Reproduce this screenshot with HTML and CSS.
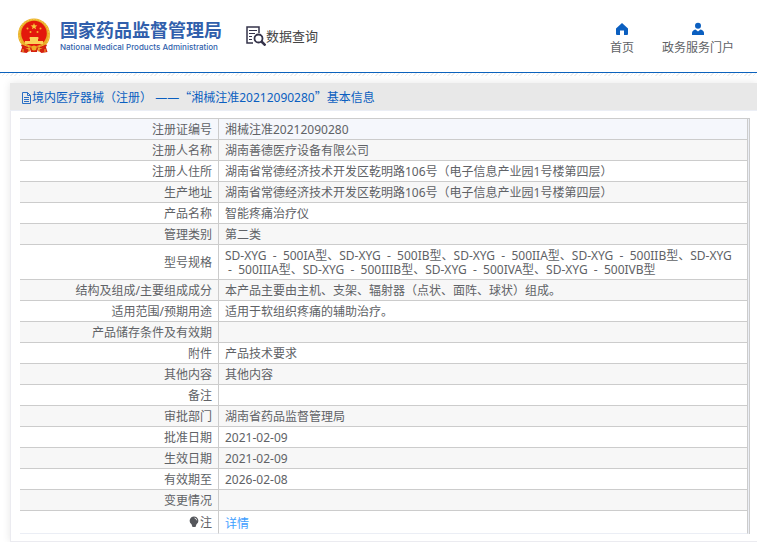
FILE: index.html
```html
<!DOCTYPE html>
<html lang="zh-CN">
<head>
<meta charset="utf-8">
<title>数据查询</title>
<link rel="stylesheet" href="styles.css">
</head>
<body>
<header class="site-header">
  <div class="brand">
    <svg class="emblem" viewBox="0 0 34 36" aria-hidden="true">
      <path d="M6 26 3.500 34l6 1 4-3h7l4 3 6-1L28 26z" fill="#d5200f"/>
      <circle cx="17" cy="16.500" r="16" fill="#e9ac24"/>
      <circle cx="17" cy="16.500" r="15" fill="none" stroke="#f6cf50" stroke-width="1" stroke-dasharray="2 1"/>
      <circle cx="17" cy="15.500" r="12.800" fill="#e3180c"/>
      <path d="m17 5 .9 2.300 2.500.1-2 1.500.7 2.400-2.100-1.400-2.100 1.400.7-2.400-2-1.500 2.500-.1z" fill="#f8c83c"/>
      <g fill="#f4b52c"><circle cx="10.500" cy="10.500" r="1"/><circle cx="23.500" cy="10.500" r="1"/><circle cx="13.500" cy="14" r="1"/><circle cx="20.500" cy="14" r="1"/></g>
      <path d="M13 19h8l1 1.500h-1V23h5v3H8v-3h5v-2.500h-1z" fill="#fbd158"/>
      <path d="M5 26q12 5 24 0l1 2q-5 3-9 2l-1 4h-6l-1-4q-4 1-9-2z" fill="#d5200f"/>
      <path d="M5 26q6 3 9 3h6q3 0 9-3M12 29v5M22 29v5M6 31v3M28 31v3" fill="none" stroke="#f1b52d"/>
      <circle cx="17" cy="30" r="2.500" fill="#efad26"/>
    </svg>
    <div class="brand-text">
      <strong class="brand-cn">国家药品监督管理局</strong>
      <span class="brand-en">National Medical Products Administration</span>
    </div>
  </div>
  <div class="section-name">
    <svg class="query-icon" viewBox="0 0 20 20" fill="none" stroke="#35334a" aria-hidden="true">
      <path d="M7 17H1V1h12v6" stroke-width="1.500"/>
      <path d="M3 4.500h8M3 7.500h6M3 10.500h3M3 13.500h3" stroke-width="1"/>
      <circle cx="12.500" cy="12.500" r="4" stroke-width="1.800"/>
      <path d="m15.500 15.500 4 4" stroke-width="2.500"/>
    </svg>
    <span>数据查询</span>
  </div>
  <nav class="top-nav">
    <a href="#home">
      <svg class="nav-icon" viewBox="0 0 14 14" aria-hidden="true"><path d="M7 1 1 6.500V12q0 1 1 1h3V8.500h4V13h3q1 0 1-1V6.500z" fill="#0b5fc0"/></svg>
      <span>首页</span>
    </a>
    <a href="#portal">
      <svg class="nav-icon" viewBox="0 0 14 14" aria-hidden="true"><circle cx="7" cy="3.700" r="3" fill="#0b5fc0"/><path d="M1 13v-2q0-2.500 3.500-3.500L7 9.500l2.500-2Q13 8.500 13 11v2z" fill="#0b5fc0"/></svg>
      <span>政务服务门户</span>
    </a>
  </nav>
</header>
<div class="hatch"></div>
<main class="panel">
  <h1 class="panel-title">
    <svg class="doc-icon" viewBox="0 0 11 12" fill="none" stroke="#2a6fc4" aria-hidden="true"><path d="M1.500.5h5l3 3v8h-8zM6.500.5v3h3M3 5.500h5M3 7.500h5M3 9.500h5"/></svg>
    <span>境内医疗器械<span class="paren" lang="zh-TW">（</span>注册<span class="paren" lang="zh-TW">）</span> ——<span class="quote">“</span>湘械注准20212090280<span class="quote">”</span>基本信息</span>
  </h1>
  <div class="table-frame">
    <table class="info">
      <tbody>
        <tr class="first"><th scope="row">注册证编号</th><td>湘械注准20212090280</td></tr>
        <tr><th scope="row">注册人名称</th><td>湖南善德医疗设备有限公司</td></tr>
        <tr><th scope="row">注册人住所</th><td>湖南省常德经济技术开发区乾明路106号<span class="paren" lang="zh-TW">（</span>电子信息产业园1号楼第四层<span class="paren" lang="zh-TW">）</span></td></tr>
        <tr><th scope="row">生产地址</th><td>湖南省常德经济技术开发区乾明路106号<span class="paren" lang="zh-TW">（</span>电子信息产业园1号楼第四层<span class="paren" lang="zh-TW">）</span></td></tr>
        <tr><th scope="row">产品名称</th><td>智能疼痛治疗仪</td></tr>
        <tr><th scope="row">管理类别</th><td>第二类</td></tr>
        <tr><th scope="row">型号规格</th><td>SD-XYG&nbsp; -&nbsp; 500IA型、SD-XYG&nbsp; -&nbsp; 500IB型、SD-XYG&nbsp; -&nbsp; 500IIA型、SD-XYG&nbsp; -&nbsp; 500IIB型、SD-XYG<br>&nbsp;-&nbsp; 500IIIA型、SD-XYG&nbsp; -&nbsp; 500IIIB型、SD-XYG&nbsp; -&nbsp; 500IVA型、SD-XYG&nbsp; -&nbsp; 500IVB型</td></tr>
        <tr><th scope="row">结构及组成/主要组成成分</th><td>本产品主要由主机、支架、辐射器<span class="paren" lang="zh-TW">（</span>点状、面阵、球状<span class="paren" lang="zh-TW">）</span>组成。</td></tr>
        <tr><th scope="row">适用范围/预期用途</th><td>适用于软组织疼痛的辅助治疗。</td></tr>
        <tr><th scope="row">产品储存条件及有效期</th><td></td></tr>
        <tr><th scope="row">附件</th><td>产品技术要求</td></tr>
        <tr><th scope="row">其他内容</th><td>其他内容</td></tr>
        <tr><th scope="row">备注</th><td></td></tr>
        <tr><th scope="row">审批部门</th><td>湖南省药品监督管理局</td></tr>
        <tr><th scope="row">批准日期</th><td>2021-02-09</td></tr>
        <tr><th scope="row">生效日期</th><td>2021-02-09</td></tr>
        <tr><th scope="row">有效期至</th><td>2026-02-08</td></tr>
        <tr><th scope="row">变更情况</th><td></td></tr>
        <tr class="last"><th scope="row"><svg class="bulb-icon" viewBox="0 0 10 12" aria-hidden="true"><path d="M5 .5a4.300 4.300 0 0 1 2.500 7.800L6.500 11h-3l-1-2.700A4.300 4.300 0 0 1 5 .5z" fill="#55575c"/><path d="M5.500 2q2 .3 2.200 2.300" fill="none" stroke="#fff" stroke-width=".8"/></svg>注</th><td><a href="#detail">详情</a></td></tr>
      </tbody>
    </table>
  </div>
</main>
</body>
</html>
```
FILE: styles.css
```css
* {
  box-sizing: border-box;
}

body {
  margin: 0;
  background: #fff;
  color: #606266;
  font: 12px/14px "Noto Sans", "Noto Sans CJK SC", sans-serif;
}

a {
  color: inherit;
  text-decoration: none;
}

.site-header {
  display: flex;
  align-items: center;
  height: 73px;
  padding: 0 23px 0 17px;
  border-bottom: 1px solid #0b62bd;
}

.hatch {
  height: 3px;
  background: repeating-linear-gradient(135deg, #eee 0 1px, #fff 1px 3px);
}

.brand {
  display: flex;
  align-items: center;
  gap: 9px;
}

.emblem {
  width: 34px;
  height: 36px;
}

.brand-text {
  display: flex;
  flex-direction: column;
  color: #315fac;
  white-space: nowrap;
}

.brand-cn {
  font-size: 18px;
  line-height: 22px;
}

.brand-en {
  font: 500 8px/12px Inter, sans-serif;
}

.section-name {
  display: flex;
  align-items: center;
  margin-left: 24px;
  color: #444;
  font-size: 13px;
  line-height: 20px;
}

.query-icon {
  width: 20px;
  height: 20px;
}

.top-nav {
  display: flex;
  gap: 28px;
  margin-left: auto;
  padding-top: 8px;
}

.top-nav a {
  display: flex;
  flex-direction: column;
  align-items: center;
  gap: 2px;
  line-height: 20px;
}

.nav-icon {
  width: 14px;
  height: 14px;
}

.panel {
  margin: 7px 0 0 10px;
  padding-bottom: 7px;
  border: 1px solid #ebebf0;
  border-width: 0 0 1px 1px;
  box-shadow: 0 0 8px rgba(0, 0, 0, 0.1);
}

.panel-title {
  display: flex;
  align-items: center;
  height: 28px;
  margin: 0 0 7px -1px;
  padding: 2px 11px 0;
  background: #e8e8e8;
  border-bottom: 1px solid #ebeef5;
  color: #0b5fc0;
  font-size: 12px;
  font-weight: 400;
}

.doc-icon {
  width: 11px;
  height: 12px;
}

/* Full-width punctuation centred in its em box */
.paren {
  font-family: "Noto Sans CJK TC", sans-serif;
  line-height: 10px;
}

.quote {
  font-family: "Noto Sans CJK SC", sans-serif;
  line-height: 10px;
}

.table-frame {
  margin: 0 7px 0 9px;
  padding-right: 1px;
  border: 1px solid #ccc;
  border-width: 1px 1px 0 0;
  background: #ebeef5;
}

.info {
  width: 100%;
  border-spacing: 0;
  background: #fff;
}

.info th,
.info td {
  height: 21px;
  padding: 4px 6px 2px;
  border: 1px solid #ccc;
  border-width: 0 1px 1px 0;
  font-weight: 400;
  text-align: left;
}

.info th {
  width: 199px;
  text-align: right;
}

.info tr:nth-child(even) {
  background: #f7f7f7;
}

.info .first {
  background: #f5f7fc;
}

.info .last th,
.info .last td {
  height: 23px;
  border-bottom-color: #ebeef5;
}

.info .last td {
  padding: 6px 6px 2px;
}

.info .last a {
  color: #409eff;
}

.bulb-icon {
  width: 10px;
  height: 12px;
  margin-right: 1px;
  vertical-align: -1px;
}
```
